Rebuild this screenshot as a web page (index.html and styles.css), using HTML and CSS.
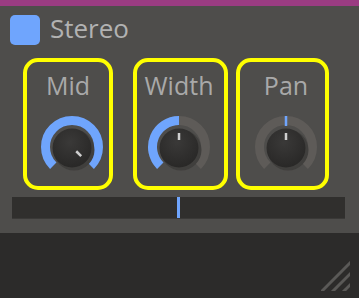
FILE: index.html
```html
<!DOCTYPE html>
<html lang="en">
<head>
  <meta charset="UTF-8">
  <meta name="viewport" content="width=device-width, initial-scale=1.0">
  <title>Stereo</title>
  <link rel="stylesheet" href="styles.css">
</head>
<body>
  <div class="top-bar"></div>

  <div class="panel">
    <!-- Module header -->
    <div class="header">
      <div class="swatch"></div>
      <span class="title">Stereo</span>
    </div>

    <!-- Knobs -->
    <div class="controls">
      <div class="control mid">
        <div class="label">Mid</div>
        <svg class="knob" width="64" height="64" viewBox="0 0 64 64">
          <defs>
            <radialGradient id="body" cx="45%" cy="35%" r="65%">
              <stop offset="0" stop-color="#3a3938"/>
              <stop offset="1" stop-color="#292827"/>
            </radialGradient>
          </defs>
          <path d="M13.26 50.74 A26.5 26.5 0 1 1 50.74 50.74" class="fill" />
          <circle cx="34" cy="35" r="20.5" class="shadow" />
          <circle cx="32" cy="33" r="19.5" fill="url(#body)" />
          <line x1="32" y1="19" x2="32" y2="26" class="pointer" transform="rotate(135 32 32)" />
        </svg>
      </div>

      <div class="control width">
        <div class="label">Width</div>
        <svg class="knob" width="64" height="64" viewBox="0 0 64 64">
          <path d="M13.26 50.74 A26.5 26.5 0 1 1 50.74 50.74" class="track" />
          <path d="M13.26 50.74 A26.5 26.5 0 0 1 32 5.5" class="fill" />
          <circle cx="34" cy="35" r="20.5" class="shadow" />
          <circle cx="32" cy="33" r="19.5" fill="url(#body)" />
          <line x1="32" y1="18" x2="32" y2="25" class="pointer" />
        </svg>
      </div>

      <div class="control pan">
        <div class="label">Pan</div>
        <svg class="knob" width="64" height="64" viewBox="0 0 64 64">
          <path d="M13.26 50.74 A26.5 26.5 0 1 1 50.74 50.74" class="track" />
          <rect x="30.75" y="1" width="2.5" height="10" fill="#6fa5fd" />
          <circle cx="34" cy="35" r="20.5" class="shadow" />
          <circle cx="32" cy="33" r="19.5" fill="url(#body)" />
          <line x1="32" y1="18" x2="32" y2="25" class="pointer" />
        </svg>
      </div>
    </div>

    <!-- Pan meter -->
    <div class="meter">
      <div class="marker"></div>
    </div>
  </div>

  <div class="footer">
    <svg class="grip" width="30" height="31" viewBox="0 0 30 31">
      <defs>
        <clipPath id="gripClip"><rect x="0" y="0" width="29" height="30"/></clipPath>
      </defs>
      <g clip-path="url(#gripClip)" stroke="#5a5957" stroke-width="3">
        <line x1="31" y1="0" x2="0" y2="31" />
        <line x1="42" y1="0" x2="11" y2="31" />
        <line x1="53" y1="0" x2="22" y2="31" />
      </g>
    </svg>
  </div>
</body>
</html>
```

FILE: styles.css
```css
body {
  margin: 0;
  width: 359px;
  height: 298px;
  background-color: #2c2b2a;
  font-family: "Open Sans", "Noto Sans", sans-serif;
  overflow: hidden;
}

.top-bar {
  height: 6px;
  background-color: #9a3c82;
}

.panel {
  height: 227px;
  background-color: #4e4d4b;
  box-sizing: border-box;
  padding-top: 7px;
}

/* Header */
.header {
  display: flex;
  align-items: flex-start;
  padding-left: 10px;
  gap: 10px;
  height: 32px;
}

.swatch {
  width: 30px;
  height: 30px;
  margin-top: 2px;
  border-radius: 5px;
  background-color: #6fa5fd;
}

.title {
  font-size: 26px;
  line-height: 30px;
  color: #b2b2b2;
}

/* Knob row */
.controls {
  display: flex;
  padding-left: 23px;
  margin-top: 13px;
}

.control {
  box-sizing: border-box;
  height: 132px;
  border: 4px solid #ffff00;
  border-radius: 15px;
  display: flex;
  flex-direction: column;
  align-items: center;
  padding-top: 8px;
}

.control.mid {
  width: 90px;
  margin-right: 20px;
}

.control.mid .knob {
  margin-left: 7px;
}

.control.width {
  width: 95px;
  margin-right: 8px;
  padding-right: 3px;
}

.control.pan {
  width: 93px;
  padding-left: 7px;
}

.label {
  font-size: 25px;
  line-height: 30px;
  color: #a9a9a9;
}

.knob {
  display: block;
  margin-top: 15px;
}

.track {
  fill: none;
  stroke: #5e5b58;
  stroke-width: 9;
}

.fill {
  fill: none;
  stroke: #6fa5fd;
  stroke-width: 9;
}

.shadow {
  fill: #403f3d;
}

.pointer {
  stroke: #cfcfcf;
  stroke-width: 2.5;
}

/* Meter */
.meter {
  position: relative;
  margin: 7px 14px 0 12px;
  height: 22px;
  background-color: #302f2d;
  border-bottom: 1px solid #3a3937;
  box-sizing: border-box;
}

.marker {
  position: absolute;
  left: 165px;
  top: 0;
  width: 3px;
  height: 100%;
  background-color: #6fa5fd;
}

/* Footer */
.footer {
  height: 65px;
  display: flex;
  justify-content: flex-end;
  align-items: flex-end;
  padding: 0 8px 6px 0;
  box-sizing: border-box;
}

.grip {
  display: block;
}
```
